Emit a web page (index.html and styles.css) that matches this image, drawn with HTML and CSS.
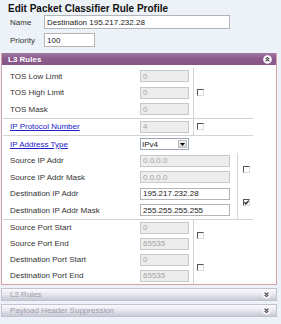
FILE: index.html
```html
<!DOCTYPE html>
<html lang="en">
<head>
    <meta charset="UTF-8">
    <title>Edit Packet Classifier Rule Profile</title>
    <link rel="stylesheet" href="styles.css">
</head>
<body>

<h2 class="title">Edit Packet Classifier Rule Profile</h2>

<div class="meta">
    <div class="meta-row">
        <label class="meta-label">Name</label>
        <input type="text" class="txt name" value="Destination 195.217.232.28">
    </div>
    <div class="meta-row">
        <label class="meta-label">Priority</label>
        <input type="text" class="txt prio" value="100">
    </div>
</div>

<div class="panel">
    <div class="panel-head">
        <span>L3 Rules</span>
        <svg class="toggle" width="9" height="9" viewBox="0 0 9 9">
            <circle cx="4.5" cy="4.5" r="4.3" fill="#fff"/>
            <path d="M2.6 4.2 L4.5 2.4 L6.4 4.2 M2.6 6.4 L4.5 4.6 L6.4 6.4" fill="none" stroke="#444" stroke-width="1.1"/>
        </svg>
    </div>

    <div class="panel-body">
        <!-- TOS -->
        <div class="group">
            <div class="fields">
                <div class="row"><span class="lbl">TOS Low Limit</span><input class="txt small" disabled value="0"></div>
                <div class="row"><span class="lbl">TOS High Limit</span><input class="txt small" disabled value="0"></div>
                <div class="row"><span class="lbl">TOS Mask</span><input class="txt small" disabled value="0"></div>
            </div>
            <div class="chk">
                <div class="slot"><span class="box"></span></div>
            </div>
        </div>

        <!-- protocol -->
        <div class="group">
            <div class="fields">
                <div class="row"><a href="#" class="lbl link">IP Protocol Number</a><input class="txt small" disabled value="4"></div>
            </div>
            <div class="chk">
                <div class="slot"><span class="box"></span></div>
            </div>
        </div>

        <!-- addresses -->
        <div class="group col">
            <div class="row pad">
                <a href="#" class="lbl link">IP Address Type</a>
                <div class="sel">
                    <select><option>IPv4</option><option>IPv6</option></select>
                    <span class="sel-btn">
                        <svg width="5" height="3" viewBox="0 0 5 3"><path d="M0 0 H5 L2.5 3 Z" fill="#000"/></svg>
                    </span>
                </div>
            </div>
            <div class="sub">
                <div class="fields wide">
                    <div class="row"><span class="lbl">Source IP Addr</span><input class="txt big" disabled value="0.0.0.0"></div>
                    <div class="row"><span class="lbl">Source IP Addr Mask</span><input class="txt big" disabled value="0.0.0.0"></div>
                    <div class="row"><span class="lbl">Destination IP Addr</span><input class="txt big" value="195.217.232.28"></div>
                    <div class="row"><span class="lbl">Destination IP Addr Mask</span><input class="txt big" value="255.255.255.255"></div>
                </div>
                <div class="chk narrow">
                    <div class="slot"><span class="box"></span></div>
                    <div class="slot">
                        <span class="box">
                            <svg width="5" height="5" viewBox="0 0 5 5"><path d="M0.3 2.2 L1.9 3.9 L4.7 0.6" fill="none" stroke="#222" stroke-width="1.3"/></svg>
                        </span>
                    </div>
                </div>
            </div>
        </div>

        <!-- ports -->
        <div class="group last">
            <div class="fields">
                <div class="row port"><span class="lbl">Source Port Start</span><input class="txt small" disabled value="0"></div>
                <div class="row port"><span class="lbl">Source Port End</span><input class="txt small" disabled value="65535"></div>
                <div class="row port"><span class="lbl">Destination Port Start</span><input class="txt small" disabled value="0"></div>
                <div class="row port"><span class="lbl">Destination Port End</span><input class="txt small" disabled value="65535"></div>
            </div>
            <div class="chk">
                <div class="slot"><span class="box"></span></div>
                <div class="slot"><span class="box"></span></div>
            </div>
        </div>
    </div>
</div>

<div class="bar">
    <span>L2 Rules</span>
    <svg class="toggle" width="9" height="9" viewBox="0 0 9 9">
        <circle cx="4.5" cy="4.5" r="4.3" fill="#f4f4f8"/>
        <path d="M2.6 2.6 L4.5 4.4 L6.4 2.6 M2.6 4.8 L4.5 6.6 L6.4 4.8" fill="none" stroke="#444" stroke-width="1.1"/>
    </svg>
</div>
<div class="bar">
    <span>Payload Header Suppression</span>
    <svg class="toggle" width="9" height="9" viewBox="0 0 9 9">
        <circle cx="4.5" cy="4.5" r="4.3" fill="#f4f4f8"/>
        <path d="M2.6 2.6 L4.5 4.4 L6.4 2.6 M2.6 4.8 L4.5 6.6 L6.4 4.8" fill="none" stroke="#444" stroke-width="1.1"/>
    </svg>
</div>

</body>
</html>
```

FILE: styles.css
```css
body {
    margin: 0;
    font-family: "Liberation Sans", Arial, sans-serif;
    font-size: 8px;
    color: #222;
    background-color: #edf1f8;
}
.title {
    margin: 0;
    padding: 3px 8px 0;
    font-size: 10px;
    line-height: 12px;
    font-weight: bold;
    color: #111;
}
.meta {
    display: flex;
    flex-direction: column;
    gap: 4px;
}
.meta-row {
    display: flex;
    align-items: center;
    height: 14px;
}
.meta-label {
    width: 34px;
    padding-left: 10px;
    color: #333;
}
.txt {
    box-sizing: border-box;
    margin: 0;
    padding: 0 2px;
    height: 12px;
    font-family: inherit;
    font-size: 8px;
    color: #222;
    background: #fff;
    border: 1px solid #b4b4b4;
    border-radius: 0;
    outline: none;
}
.txt:disabled {
    background: #ededed;
    border-color: #c8c8c8;
    color: #a4a4a4;
}
.name {
    width: 186px;
    height: 14px;
}
.prio {
    width: 51px;
    height: 14px;
}
.small {
    width: 49px;
}
.big {
    width: 90px;
}

.panel {
    margin: 6px 4px 0 1px;
    border: 1px solid #d7a1aa;
    border-top: none;
    background: #fff;
}
.panel-head {
    display: flex;
    align-items: center;
    justify-content: space-between;
    height: 12px;
    padding: 0 4px 0 6px;
    background: linear-gradient(#a47ba5, #8b5b8c 45%, #87568a);
    color: #fff;
    font-weight: bold;
}
.panel-body {
    padding-top: 3px;
}
.toggle {
    display: block;
}

.group {
    display: flex;
    width: 250px;
    margin-left: 1px;
    border-bottom: 1px solid #d4d4d4;
}
.group.col {
    flex-direction: column;
}
.group.last {
    border-bottom: none;
}
.sub {
    display: flex;
}
.fields {
    width: 190px;
    padding-left: 7px;
    box-sizing: border-box;
}
.fields.wide {
    width: 234px;
}
.row {
    display: flex;
    align-items: center;
    height: 16.5px;
}
.row.pad {
    padding-left: 7px;
}
.row.port {
    height: 16px;
}
.lbl {
    width: 130px;
    flex: none;
    color: #333;
}
.link {
    color: #2020c8;
    text-decoration: underline;
}
.chk {
    flex: 1;
    display: flex;
    flex-direction: column;
    border-left: 1px solid #d4d4d4;
    padding-left: 3px;
}
.chk.narrow {
    padding-left: 5px;
}
.slot {
    flex: 1;
    display: flex;
    align-items: center;
}
.box {
    box-sizing: border-box;
    display: flex;
    align-items: center;
    justify-content: center;
    width: 7px;
    height: 7px;
    background: #fff;
    border-top: 1px solid #555;
    border-left: 1px solid #555;
    border-right: 1px solid #ddd;
    border-bottom: 1px solid #ddd;
}

.sel {
    display: flex;
    width: 49px;
    height: 12px;
    box-sizing: border-box;
    border: 1px solid #9aa6b8;
    background: #fff;
}
.sel select {
    appearance: none;
    flex: 1;
    min-width: 0;
    margin: 0;
    padding: 0 1px;
    border: none;
    background: transparent;
    font-family: inherit;
    font-size: 8px;
    color: #222;
    outline: none;
}
.sel-btn {
    display: flex;
    align-items: center;
    justify-content: center;
    width: 9px;
    margin: 1px;
    background: linear-gradient(#f4f4f4, #d8d8d8);
    border: 1px solid #bcbcbc;
    box-sizing: border-box;
}

.bar {
    display: flex;
    align-items: center;
    justify-content: space-between;
    box-sizing: border-box;
    height: 13px;
    margin: 3px 4px 0 1px;
    padding: 0 5px 0 8px;
    border: 1px solid #c2c2d0;
    background: linear-gradient(#fbfbfd, #e6e6ee 50%, #c9c9d6);
    color: #9c9caa;
}
```
